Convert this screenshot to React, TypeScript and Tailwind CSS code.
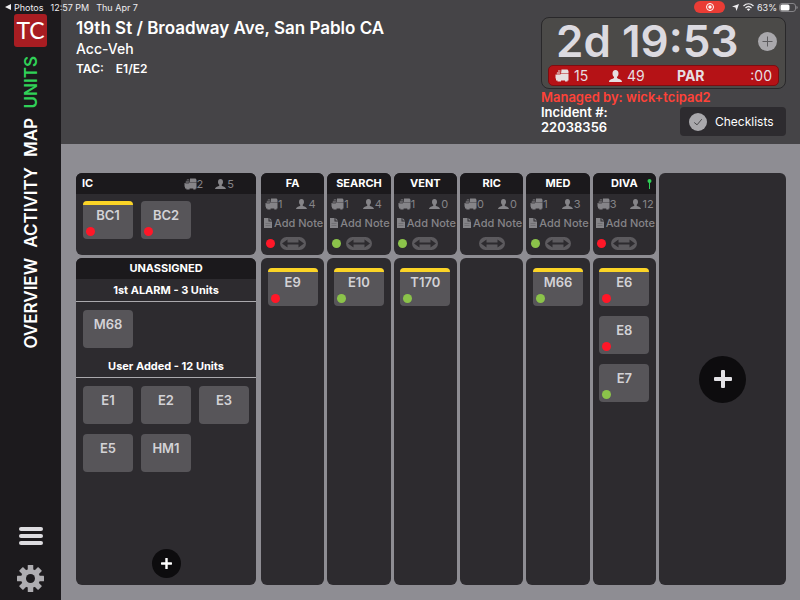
import React from 'react';
import { clsx } from 'clsx';

type Status = 'red' | 'green';

interface Unit {
  name: string;
  status?: Status;
  flagged?: boolean;
}

interface Division {
  name: string;
  engines: number;
  people: number;
  status?: Status;
  pinned?: boolean;
  units: Unit[];
}

const divisions: Division[] = [
  { name: 'FA', engines: 1, people: 4, status: 'red', units: [{ name: 'E9', status: 'red', flagged: true }] },
  { name: 'SEARCH', engines: 1, people: 4, status: 'green', units: [{ name: 'E10', status: 'green', flagged: true }] },
  { name: 'VENT', engines: 1, people: 0, status: 'green', units: [{ name: 'T170', status: 'green', flagged: true }] },
  { name: 'RIC', engines: 0, people: 0, units: [] },
  { name: 'MED', engines: 1, people: 3, status: 'green', units: [{ name: 'M66', status: 'green', flagged: true }] },
  {
    name: 'DIVA',
    engines: 3,
    people: 12,
    status: 'red',
    pinned: true,
    units: [
      { name: 'E6', status: 'red', flagged: true },
      { name: 'E8', status: 'red' },
      { name: 'E7', status: 'green' },
    ],
  },
];

const command: Unit[] = [{ name: 'BC1', status: 'red', flagged: true }, { name: 'BC2', status: 'red' }];
const userAdded: Unit[] = [{ name: 'E1' }, { name: 'E2' }, { name: 'E3' }, { name: 'E5' }, { name: 'HM1' }];
const tabs = ['UNITS', 'MAP', 'ACTIVITY', 'OVERVIEW'];

// Three-quarter view of a fire engine: cab on the left, body on the right
function EngineIcon({ className }: { className?: string }) {
  return (
    <svg viewBox="0 0 28 26" fill="currentColor" className={className} aria-hidden="true">
      <path d="M6 3h5v2H6zM13 1h12l2 3v5H12z" />
      <path d="M4 6h7l-1 6H3z" fillOpacity=".6" />
      <path d="M1 11h2v1h7l1-2h16v13h-2v2h-5v-2h-8v2H5v-2H2v-4H1z" />
    </svg>
  );
}

function PersonIcon({ className }: { className?: string }) {
  return (
    <svg viewBox="0 0 26 24" fill="currentColor" className={className} aria-hidden="true">
      <path d="M13 0c4 0 6 3 6 7 0 3-1 5-3 7v2c2 2 10 2 10 8H0c0-6 8-6 10-8v-2c-2-2-3-4-3-7 0-4 2-7 6-7z" />
    </svg>
  );
}

function GearIcon() {
  return (
    <svg viewBox="0 0 54 54" className="size-[27px]" aria-hidden="true">
      <g fill="#aeadb1">
        {[0, 45, 90, 135].map((angle) => (
          <rect key={angle} x="21.500" y="0" width="11" height="54" rx="1" transform={`rotate(${angle} 27 27)`} />
        ))}
        <circle cx="27" cy="27" r="19" />
      </g>
      <circle cx="27" cy="27" r="9" fill="#1c1a1d" />
    </svg>
  );
}

function PlusIcon({ className }: { className?: string }) {
  return (
    <svg viewBox="0 0 18 18" fill="currentColor" className={className} aria-hidden="true">
      <rect x="7" y="0" width="4" height="18" rx="1" />
      <rect x="0" y="7" width="18" height="4" rx="1" />
    </svg>
  );
}

function StatusDot({ status, className }: { status: Status; className?: string }) {
  return (
    <span
      className={clsx('block size-[9px] rounded-full', status === 'red' ? 'bg-[#ff1728]' : 'bg-[#8bc34a]', className)}
    />
  );
}

function UnitTile({ unit }: { unit: Unit }) {
  return (
    <button
      type="button"
      className="relative h-[38px] w-[50px] overflow-hidden rounded-[4px] bg-[#575559] pb-2.5 text-[13px] leading-4 font-semibold text-[#d3d2d6]"
    >
      {unit.flagged && <span className="absolute inset-x-0 top-0 h-1 bg-[#fbd426]" />}
      {unit.name}
      {unit.status && <StatusDot status={unit.status} className="absolute bottom-[3px] left-[3px]" />}
    </button>
  );
}

function Counts({ engines, people, className }: { engines: number; people: number; className?: string }) {
  return (
    <div className={clsx('flex items-center text-[11px] leading-4 text-[#858488]', className)}>
      <span className="flex items-center">
        <EngineIcon className="h-3 w-[13px]" />
        {engines}
      </span>
      <span className="flex items-center">
        <PersonIcon className="mr-px h-2.5 w-[11px]" />
        {people}
      </span>
    </div>
  );
}

function DivisionHead({ division }: { division: Division }) {
  return (
    <section className="h-[82px] overflow-hidden rounded-[6px] bg-[#2d2b2f]">
      <h2 className="relative h-[21px] bg-[#1b191c] text-center text-[11px] leading-[21px] font-bold text-white">
        {division.name}
        {division.pinned && (
          <svg viewBox="0 0 10 20" className="absolute top-1.5 right-1 h-2.5 w-[5px]" aria-hidden="true">
            <circle cx="5" cy="4" r="4" fill="#30d158" />
            <path d="M5 4v16" stroke="#30d158" strokeWidth="2" />
          </svg>
        )}
      </h2>
      <Counts engines={division.engines} people={division.people} className="mt-0.5 gap-3.5 pl-1" />
      <button
        type="button"
        className="mt-[3px] flex items-center pl-[3px] text-[11px] leading-4 font-medium whitespace-nowrap text-[#858488]"
      >
        <svg viewBox="0 0 16 20" className="mr-0.5 h-2.5 w-2" aria-hidden="true">
          <path d="M0 0h9v7h7v13H0zM11 0l5 5h-5z" fill="currentColor" />
          <path d="M3 11h10M3 15h10" stroke="#2d2b2f" strokeOpacity=".3" strokeWidth="1.500" />
        </svg>
        Add Note
      </button>
      <div className="mt-1.5 grid grid-cols-[14px_26px_14px] items-center justify-center">
        <span>{division.status && <StatusDot status={division.status} />}</span>
        <button type="button" aria-label={`Move ${division.name}`}>
          <svg viewBox="0 0 52 26" className="h-[13px] w-[26px]" aria-hidden="true">
            <rect width="52" height="26" rx="13" fill="#5c5a5e" />
            <path d="M4 13 15 5v6h22V5l11 8-11 8v-6H15v6z" fill="#2d2b2f" />
          </svg>
        </button>
      </div>
    </section>
  );
}

function Sidebar() {
  return (
    <aside className="flex w-[61px] shrink-0 flex-col items-center bg-[#1c1a1d] pt-3.5 pb-2">
      <div className="flex h-[33px] w-[33px] items-center justify-center rounded-[3px] bg-[#a81d22] font-['Lato','Inter',sans-serif] text-[23px] leading-none text-white">
        TC
      </div>
      <nav className="mt-[9px] flex flex-col items-center gap-2.5">
        {tabs.map((tab, i) => (
          <a
            key={tab}
            href={`#${tab.toLowerCase()}`}
            className={clsx(
              'rotate-180 text-[17px] leading-5 font-semibold [writing-mode:vertical-rl]',
              i === 0 ? 'text-[#30d158]' : 'text-white'
            )}
          >
            {tab}
          </a>
        ))}
      </nav>
      <button type="button" aria-label="Menu" className="mt-auto flex w-6 flex-col gap-[3px]">
        <span className="h-1 w-full rounded-sm bg-[#dddce0]" />
        <span className="h-1 w-full rounded-sm bg-[#dddce0]" />
        <span className="h-1 w-full rounded-sm bg-[#dddce0]" />
      </button>
      <button type="button" aria-label="Settings" className="mt-5">
        <GearIcon />
      </button>
    </aside>
  );
}

function StatusBar() {
  return (
    <div className="absolute inset-x-0 top-0 flex h-3.5 items-center pr-0.5 pl-[5px] text-[9px] leading-none text-[#eeedf0]">
      <svg viewBox="0 0 12 12" className="mr-[3px] size-1.5" aria-hidden="true">
        <path d="M0 6 12 0v12z" fill="currentColor" />
      </svg>
      <span>Photos</span>
      <span className="ml-[7px]">12:57 PM</span>
      <span className="ml-[7px]">Thu Apr 7</span>
      <span className="ml-auto flex h-3 w-[31px] items-center justify-center rounded-full bg-[#e93c35]">
        <svg viewBox="0 0 16 16" className="size-2" aria-hidden="true">
          <circle cx="8" cy="8" r="7" fill="none" stroke="white" strokeWidth="2" />
          <circle cx="8" cy="8" r="3.500" fill="white" />
        </svg>
      </span>
      <svg viewBox="0 0 14 14" className="ml-[7px] size-[7px]" aria-hidden="true">
        <path d="M14 0 9 14 7 7 0 5z" fill="currentColor" />
      </svg>
      <svg viewBox="0 0 22 16" className="ml-1 h-2 w-[11px]" fill="none" stroke="currentColor" strokeWidth="2.400" aria-hidden="true">
        <path d="M1 6c6-6 14-6 20 0M5 10c4-4 8-4 12 0" />
        <path d="m7.500 12.500 3.500 3.500 3.500-3.500c-2-2-5-2-7 0z" fill="currentColor" stroke="none" />
      </svg>
      <span className="ml-[3px]">63%</span>
      <svg viewBox="0 0 38 18" className="ml-0.5 h-[9px] w-[19px]" aria-hidden="true">
        <rect x="1" y="1" width="32" height="16" rx="5" fill="none" stroke="#9b9a9e" strokeWidth="1.500" />
        <rect x="3" y="3" width="18" height="12" rx="3" fill="white" />
        <path d="M35 6c3 1 3 5 0 6z" fill="#9b9a9e" />
      </svg>
    </div>
  );
}

function Header() {
  return (
    <header className="flex h-36 justify-between bg-[#454447] pr-3.5 pl-[15px] text-white">
      <div className="pt-[17px]">
        <h1 className="text-[17px] leading-[22px] font-semibold">19th St / Broadway Ave, San Pablo CA</h1>
        <p className="text-[14px] leading-5 font-medium">Acc-Veh</p>
        <p className="mt-0.5 flex gap-3 text-[12px] leading-4 font-semibold">
          <span>TAC:</span>
          <span>E1/E2</span>
        </p>
      </div>
      <div className="w-[245px] pt-[17px]">
        <div className="h-[72px] rounded-[8px] border border-[#29282a] bg-[#4b4a48] px-1.5">
          <div className="flex h-[47px] items-center justify-between pr-0.5 pl-2">
            <time className="text-[44px] leading-[47px] font-semibold whitespace-nowrap text-[#dcdae0]">2d 19:53</time>
            <button type="button" aria-label="Add time" className="rounded-full bg-[#a9a8ac] text-[#5d5c5f]">
              <svg viewBox="0 0 38 38" className="size-[19px]" aria-hidden="true">
                <path d="M19 9v20M9 19h20" stroke="currentColor" strokeWidth="2" />
              </svg>
            </button>
          </div>
          <div className="grid h-[21px] grid-cols-[54px_68px_1fr_auto] items-center rounded-[5px] border border-[#7d0d10] bg-[#b51216] px-1.5 text-[14px] leading-none text-[#e6dfe1]">
            <span className="flex items-center gap-[5px]">
              <EngineIcon className="h-[13px] w-[14px]" />
              15
            </span>
            <span className="flex items-center gap-[5px]">
              <PersonIcon className="h-3 w-[13px]" />
              49
            </span>
            <strong className="font-bold">PAR</strong>
            <span>:00</span>
          </div>
        </div>
        <p className="text-[13px] leading-4 font-semibold text-[#ff4238]">Managed by: wick+tcipad2</p>
        <div className="flex justify-between">
          <p className="text-[13px] leading-[15px] font-semibold">
            Incident #:
            <br />
            22038356
          </p>
          <button
            type="button"
            className="mt-0.5 flex h-[29px] w-[106px] items-center gap-2 rounded-[4px] bg-[#2d2b2f] pl-[9px] text-[12px]"
          >
            <svg viewBox="0 0 38 38" className="size-[18px]" aria-hidden="true">
              <circle cx="19" cy="19" r="19" fill="#a9a8ac" />
              <path d="m11 20 6 5 10-12" fill="none" stroke="#454447" strokeWidth="2" />
            </svg>
            Checklists
          </button>
        </div>
      </div>
    </header>
  );
}

function Unassigned() {
  return (
    <section className="flex flex-1 flex-col overflow-hidden rounded-[6px] bg-[#2d2b2f]">
      <h2 className="h-[21px] bg-[#1b191c] text-center text-[11px] leading-[21px] font-bold text-white">UNASSIGNED</h2>
      <h3 className="h-[23px] border-b border-[#aaa9ad] text-center text-[11px] leading-[22px] font-bold text-white">
        1st ALARM - 3 Units
      </h3>
      <div className="flex flex-wrap px-[7px] pt-2">
        <UnitTile unit={{ name: 'M68' }} />
      </div>
      <h3 className="mt-[7px] h-[23px] border-b border-[#aaa9ad] text-center text-[11px] leading-[22px] font-bold text-white">
        User Added - 12 Units
      </h3>
      <div className="flex flex-wrap gap-x-2 gap-y-2.5 px-[7px] pt-2">
        {userAdded.map((unit) => (
          <UnitTile key={unit.name} unit={unit} />
        ))}
      </div>
      <button
        type="button"
        aria-label="Add unit"
        className="mx-auto mt-auto mb-[7px] flex size-[29px] items-center justify-center rounded-full bg-[#0d0c0e] text-white"
      >
        <PlusIcon className="size-[11px]" />
      </button>
    </section>
  );
}

export default function App() {
  return (
    <div className="relative flex min-h-screen bg-[#8e8d93] font-['Inter','Liberation_Sans',sans-serif]">
      <Sidebar />
      <div className="flex min-w-0 flex-1 flex-col">
        <Header />
        <main className="flex flex-1 pt-[29px] pr-3.5 pb-[15px] pl-[15px]">
          <div className="mr-[5px] flex flex-[180] flex-col gap-[3px]">
            <section className="h-[82px] overflow-hidden rounded-[6px] bg-[#2d2b2f]">
              <div className="flex h-[21px] items-center justify-between bg-[#1b191c] pr-[22px] pl-1.5">
                <h2 className="text-[11px] font-bold text-white">IC</h2>
                <Counts engines={2} people={5} className="gap-3" />
              </div>
              <div className="flex gap-2 px-[7px] pt-[7px]">
                {command.map((unit) => (
                  <UnitTile key={unit.name} unit={unit} />
                ))}
              </div>
            </section>
            <Unassigned />
          </div>
          <div className="mr-[3px] grid flex-[395] grid-cols-6 gap-[3px]">
            {divisions.map((division) => (
              <div key={division.name} className="flex min-w-0 flex-col gap-[3px]">
                <DivisionHead division={division} />
                <section className="flex flex-1 flex-col items-center gap-2.5 rounded-[6px] bg-[#2d2b2f] pt-2.5">
                  {division.units.map((unit) => (
                    <UnitTile key={unit.name} unit={unit} />
                  ))}
                </section>
              </div>
            ))}
          </div>
          <section className="flex flex-[127] items-center justify-center rounded-[6px] bg-[#2d2b2f]">
            <button
              type="button"
              aria-label="Add division"
              className="flex size-[47px] items-center justify-center rounded-full bg-[#0d0c0e] text-[#e3e2e6]"
            >
              <PlusIcon className="size-[18px]" />
            </button>
          </section>
        </main>
      </div>
      <StatusBar />
    </div>
  );
}
